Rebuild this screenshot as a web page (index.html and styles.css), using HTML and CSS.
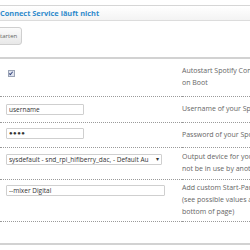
FILE: index.html
```html
<!DOCTYPE html>
<html lang="de">
<head>
    <meta charset="UTF-8">
    <meta name="viewport" content="width=device-width, initial-scale=1.0">
    <title>Spotify Connect</title>
    <link rel="stylesheet" href="styles.css">
</head>
<body>
    <div class="panel">
        <h3 class="panel-title">Connect Service läuft nicht</h3>
        <div class="actions">
            <button class="btn" type="button">Starten</button>
        </div>
        <table class="settings">
            <tr class="row-autostart">
                <td class="field"><span class="check"></span></td>
                <td class="desc">Autostart Spotify Connect<br>on Boot</td>
            </tr>
            <tr class="row-user">
                <td class="field"><input class="txt short" type="text" value="username"></td>
                <td class="desc">Username of your Spotify Account</td>
            </tr>
            <tr class="row-pass">
                <td class="field"><input class="txt short pass" type="text" value="&#9679;&#9679;&#9679;&#9679;"></td>
                <td class="desc">Password of your Spotify Account</td>
            </tr>
            <tr class="row-device">
                <td class="field">
                    <div class="select">
                        <span class="select-text">sysdefault - snd_rpi_hifiberry_dac, - Default Au</span>
                        <span class="select-arrow">&#9662;</span>
                    </div>
                </td>
                <td class="desc">Output device for your Spotify. Must<br>not be in use by another player</td>
            </tr>
            <tr class="row-params">
                <td class="field"><input class="txt long" type="text" value="--mixer Digital"></td>
                <td class="desc">Add custom Start-Parameters<br>(see possible values at the<br>bottom of page)</td>
            </tr>
            <tr class="row-empty">
                <td class="field"></td>
                <td class="desc"></td>
            </tr>
        </table>
    </div>
</body>
</html>
```

FILE: styles.css
```css
body {
    margin: 0;
    font-family: "Open Sans", "Liberation Sans", sans-serif;
    font-size: 7px;
    color: #555;
    background: #fff;
    overflow: hidden;
}
.panel {
    width: 320px;
    margin-top: 5px;
    border-top: 1px solid #d6d6d6;
}
.panel-title {
    margin: 0;
    height: 14px;
    line-height: 14px;
    font-size: 7.4px;
    font-weight: bold;
    color: #2f8bcc;
    background: linear-gradient(#ffffff, #f3f3f3);
    border-bottom: 1px solid #dcdcdc;
}
.actions {
    height: 38px;
    padding-top: 6px;
    box-sizing: border-box;
    border-bottom: 2px solid #d2d2d2;
}
.btn {
    margin-left: -8px;
    width: 30px;
    height: 18px;
    padding: 0;
    font-family: inherit;
    font-size: 6px;
    color: #666;
    background: linear-gradient(#fbfbfb, #e8e8e8);
    border: 1px solid #cfcfcf;
    border-radius: 3px;
}
.settings {
    border-collapse: collapse;
    width: 320px;
}
.settings td {
    border-bottom: 1px dotted #9a9a9a;
    padding: 0;
}
.field {
    width: 182px;
    padding-left: 6px !important;
    padding-top: 5px !important;
    vertical-align: top;
    box-sizing: border-box;
}
.desc {
    line-height: 12px;
    white-space: nowrap;
    vertical-align: middle;
    color: #666;
}
.row-autostart { height: 37px; }
.row-user { height: 26px; }
.row-pass { height: 25px; }
.row-device { height: 32px; }
.row-params { height: 42px; }
.row-empty td { height: 21px; border-bottom: 2px solid #d2d2d2; }
.check {
    display: block;
    margin: 6px 0 0 2px;
    width: 5px;
    height: 5px;
    border: 1px solid #9aa3b5;
    background: #dfe3ee;
    position: relative;
}
.check::after {
    content: "";
    position: absolute;
    left: 1px;
    top: 0;
    width: 1px;
    height: 3px;
    border: solid #3a4a80;
    border-width: 0 1px 1px 0;
    transform: rotate(40deg);
}
.txt {
    display: block;
    box-sizing: border-box;
    height: 11px;
    padding: 0 2px;
    font-family: inherit;
    font-size: 6.5px;
    color: #333;
    border: 1px solid #cfcfcf;
    border-radius: 1px;
    background: #fff;
}
.short { width: 78px; }
.long { width: 159px; }
.row-user .txt { margin-top: 2px; }
.pass { font-size: 6px; letter-spacing: 0.5px; }
.select {
    display: flex;
    align-items: center;
    box-sizing: border-box;
    margin-top: 1px;
    width: 156px;
    height: 11px;
    padding: 0 2px;
    border: 1px solid #cfcfcf;
    border-radius: 1px;
    font-size: 6.5px;
    color: #333;
}
.select-text {
    flex: 1;
    min-width: 0;
    overflow: hidden;
    white-space: nowrap;
}
.select-arrow {
    font-size: 6px;
    margin-left: 2px;
}
```
